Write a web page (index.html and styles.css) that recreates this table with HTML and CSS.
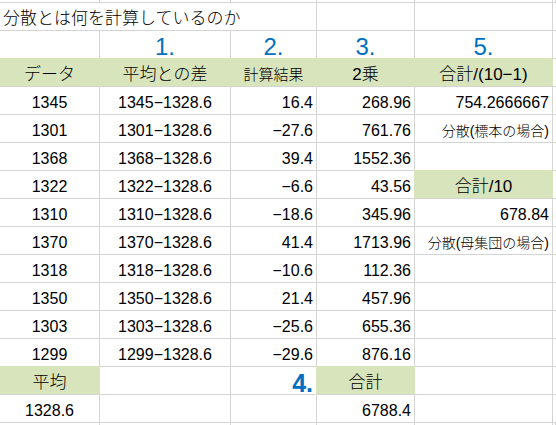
FILE: index.html
```html
<!DOCTYPE html>
<html lang="ja">
<head>
<meta charset="utf-8">
<title>分散とは何を計算しているのか</title>
<link rel="stylesheet" href="styles.css">
</head>
<body>
<div class="sheet">
  <div class="row r-top"><div class="c"></div><div class="c"></div><div class="c"></div><div class="c"></div><div class="c"></div><div class="c"></div></div>
  <div class="row">
    <div class="c left jp title">分散とは何を計算しているのか</div>
    <div class="c"></div><div class="c"></div><div class="c"></div>
  </div>
  <div class="row">
    <div class="c"></div>
    <div class="c center step">1.</div>
    <div class="c center step">2.</div>
    <div class="c center step">3.</div>
    <div class="c center step">5.</div>
    <div class="c"></div>
  </div>
  <div class="row">
    <div class="c center jp fill">データ</div>
    <div class="c center jp fill">平均との差</div>
    <div class="c center jp fill small">計算結果</div>
    <div class="c center jp fill"><span class="num">2</span>乗</div>
    <div class="c center jp fill">合計<span class="num">/(10−1)</span></div>
    <div class="c"></div>
  </div>
  <div class="row">
    <div class="c center">1345</div><div class="c center">1345−1328.6</div><div class="c right">16.4</div><div class="c right">268.96</div><div class="c right">754.2666667</div><div class="c"></div>
  </div>
  <div class="row">
    <div class="c center">1301</div><div class="c center">1301−1328.6</div><div class="c right">−27.6</div><div class="c right">761.76</div><div class="c right jp note">分散(標本の場合)</div><div class="c"></div>
  </div>
  <div class="row">
    <div class="c center">1368</div><div class="c center">1368−1328.6</div><div class="c right">39.4</div><div class="c right">1552.36</div><div class="c"></div><div class="c"></div>
  </div>
  <div class="row">
    <div class="c center">1322</div><div class="c center">1322−1328.6</div><div class="c right">−6.6</div><div class="c right">43.56</div><div class="c center jp fill">合計<span class="num">/10</span></div><div class="c"></div>
  </div>
  <div class="row">
    <div class="c center">1310</div><div class="c center">1310−1328.6</div><div class="c right">−18.6</div><div class="c right">345.96</div><div class="c right">678.84</div><div class="c"></div>
  </div>
  <div class="row">
    <div class="c center">1370</div><div class="c center">1370−1328.6</div><div class="c right">41.4</div><div class="c right">1713.96</div><div class="c right jp note">分散(母集団の場合)</div><div class="c"></div>
  </div>
  <div class="row">
    <div class="c center">1318</div><div class="c center">1318−1328.6</div><div class="c right">−10.6</div><div class="c right">112.36</div><div class="c"></div><div class="c"></div>
  </div>
  <div class="row">
    <div class="c center">1350</div><div class="c center">1350−1328.6</div><div class="c right">21.4</div><div class="c right">457.96</div><div class="c"></div><div class="c"></div>
  </div>
  <div class="row">
    <div class="c center">1303</div><div class="c center">1303−1328.6</div><div class="c right">−25.6</div><div class="c right">655.36</div><div class="c"></div><div class="c"></div>
  </div>
  <div class="row">
    <div class="c center">1299</div><div class="c center">1299−1328.6</div><div class="c right">−29.6</div><div class="c right">876.16</div><div class="c"></div><div class="c"></div>
  </div>
  <div class="row">
    <div class="c center jp fill">平均</div>
    <div class="c"></div>
    <div class="c right step step-bold">4.</div>
    <div class="c center jp fill">合計</div>
    <div class="c"></div><div class="c"></div>
  </div>
  <div class="row">
    <div class="c center">1328.6</div><div class="c"></div><div class="c"></div><div class="c right">6788.4</div><div class="c"></div><div class="c"></div>
  </div>
  <div class="row r-end"><div class="c"></div><div class="c"></div><div class="c"></div><div class="c"></div><div class="c"></div><div class="c"></div></div>
</div>
</body>
</html>
```

FILE: styles.css
```css
html, body {
  margin: 0;
  padding: 0;
  background: #ffffff;
  overflow: hidden;
}

.sheet {
  font-family: "Liberation Sans", "Noto Sans CJK JP", sans-serif;
  font-size: 16px;
  color: #000000;
}

.row {
  display: grid;
  grid-template-columns: 100px 131px 86px 98px 138px 1fr;
  height: 28px;
}

.r-top {
  height: 3px;
}

.r-end {
  height: 2px;
}

.c {
  box-sizing: border-box;
  border-right: 1px solid #d4d4d4;
  border-bottom: 1px solid #d4d4d4;
  display: flex;
  align-items: flex-end;
  padding: 0 3px 1px 3px;
  line-height: 20px;
  white-space: nowrap;
  min-width: 0;
}

.r-top .c,
.r-end .c {
  padding: 0;
  line-height: 0;
}

.r-end .c {
  border-bottom: 0;
}

.left { justify-content: flex-start; }
.center { justify-content: center; }
.right { justify-content: flex-end; }

.title {
  grid-column: span 3;
}

.jp {
  font-size: 17px;
  font-weight: 300;
}

.num {
  font-weight: 400;
}

.small {
  font-size: 15px;
}

.note {
  font-size: 14px;
}

.fill {
  background: #d8e4bc;
  border-right-color: #d8e4bc;
  box-shadow: 0 -1px 0 0 #d8e4bc, -1px 0 0 0 #d8e4bc, -1px -1px 0 0 #d8e4bc;
}

.step {
  font-size: 24px;
  color: #0070c0;
}

.step-bold {
  font-size: 25px;
  font-weight: bold;
}
```
